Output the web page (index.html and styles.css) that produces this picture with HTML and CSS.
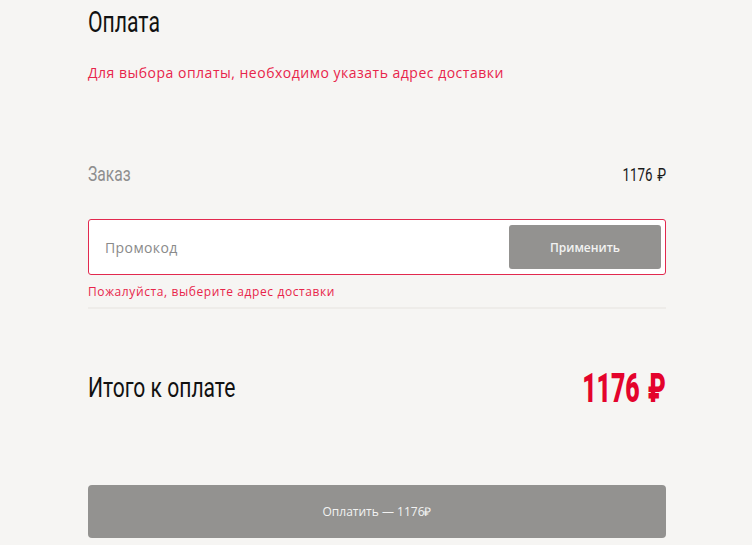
FILE: index.html
```html
<!DOCTYPE html>
<html lang="ru">
<head>
  <meta charset="UTF-8">
  <title>Оплата</title>
  <link rel="stylesheet" href="styles.css">
</head>
<body>
<div class="payment">
  <h2 class="title"><span class="narrow">Оплата</span></h2>
  <p class="note">Для выбора оплаты, необходимо указать адрес доставки</p>

  <div class="row order">
    <span class="narrow order-label">Заказ</span>
    <span class="narrow narrow-right order-sum">1176 ₽</span>
  </div>

  <div class="promo">
    <input class="promo-input" placeholder="Промокод">
    <a class="button promo-apply" href="#">Применить</a>
  </div>
  <div class="promo-error">Пожалуйста, выберите адрес доставки</div>

  <div class="row total">
    <span class="narrow total-label">Итого к оплате</span>
    <span class="narrow narrow-right total-sum">1176 ₽</span>
  </div>

  <a class="button pay" href="#">Оплатить — 1176₽</a>
</div>
</body>
</html>
```

FILE: styles.css
```css
body {
  margin: 0;
  background-color: #f6f5f3;
  font-family: "Open Sans", "Liberation Sans", sans-serif;
  color: #111;
}

.payment {
  width: 578px;
  margin-left: 88px;
  display: flex;
  flex-direction: column;
}

/* condensed display face, squeezed from Roboto */
.narrow {
  display: inline-block;
  font-family: Roboto, "Liberation Sans", sans-serif;
  transform: scaleX(0.78);
  transform-origin: left center;
  white-space: nowrap;
}

.narrow-right {
  transform-origin: right center;
}

.title {
  margin: 4px 0 0;
  font-weight: normal;
  font-size: 29px;
  line-height: 34px;
  color: #111;
}

.title .narrow {
  transform: scaleX(0.73);
}

.note {
  margin: 25px 0 0;
  font-size: 14px;
  letter-spacing: 0.5px;
  line-height: 18px;
  color: #e8254b;
}

.row {
  display: flex;
  justify-content: space-between;
  align-items: center;
}

.order {
  margin-top: 77px;
  height: 30px;
}

.order-label {
  font-size: 20px;
  color: #8e8e8e;
}

.order-sum {
  font-size: 19px;
  word-spacing: 2px;
  color: #1a1a1a;
  transform: scaleX(0.7);
}

.promo {
  margin-top: 30px;
  height: 56px;
  box-sizing: border-box;
  border: 1px solid #e2294e;
  border-radius: 3px;
  background-color: #fff;
  display: flex;
  align-items: center;
  padding: 0 4px 0 14px;
}

.promo-input {
  flex: 1;
  border: none;
  outline: none;
  background: none;
  font-family: inherit;
  font-size: 14px;
  letter-spacing: 0.4px;
  color: #555;
}

.promo-input::placeholder {
  color: #8a8a8a;
}

.button {
  display: flex;
  align-items: center;
  justify-content: center;
  text-decoration: none;
  background-color: #939290;
  color: #f2f2f2;
  border-radius: 3px;
}

.promo-apply {
  width: 152px;
  height: 44px;
  font-size: 12px;
  font-weight: 600;
}

.promo-error {
  margin-top: 8px;
  padding-bottom: 7px;
  border-bottom: 2px solid #eeece9;
  font-size: 12px;
  letter-spacing: 0.6px;
  line-height: 17px;
  color: #e8254b;
}

.total {
  margin-top: 59px;
  height: 40px;
}

.total-label {
  font-size: 27px;
  color: #111;
}

.total-sum {
  font-weight: 900;
  font-size: 40px;
  word-spacing: 3px;
  color: #e4032c;
  transform: scaleX(0.62);
}

.pay {
  margin-top: 77px;
  height: 53px;
  border-radius: 4px;
  font-size: 12px;
}
```
